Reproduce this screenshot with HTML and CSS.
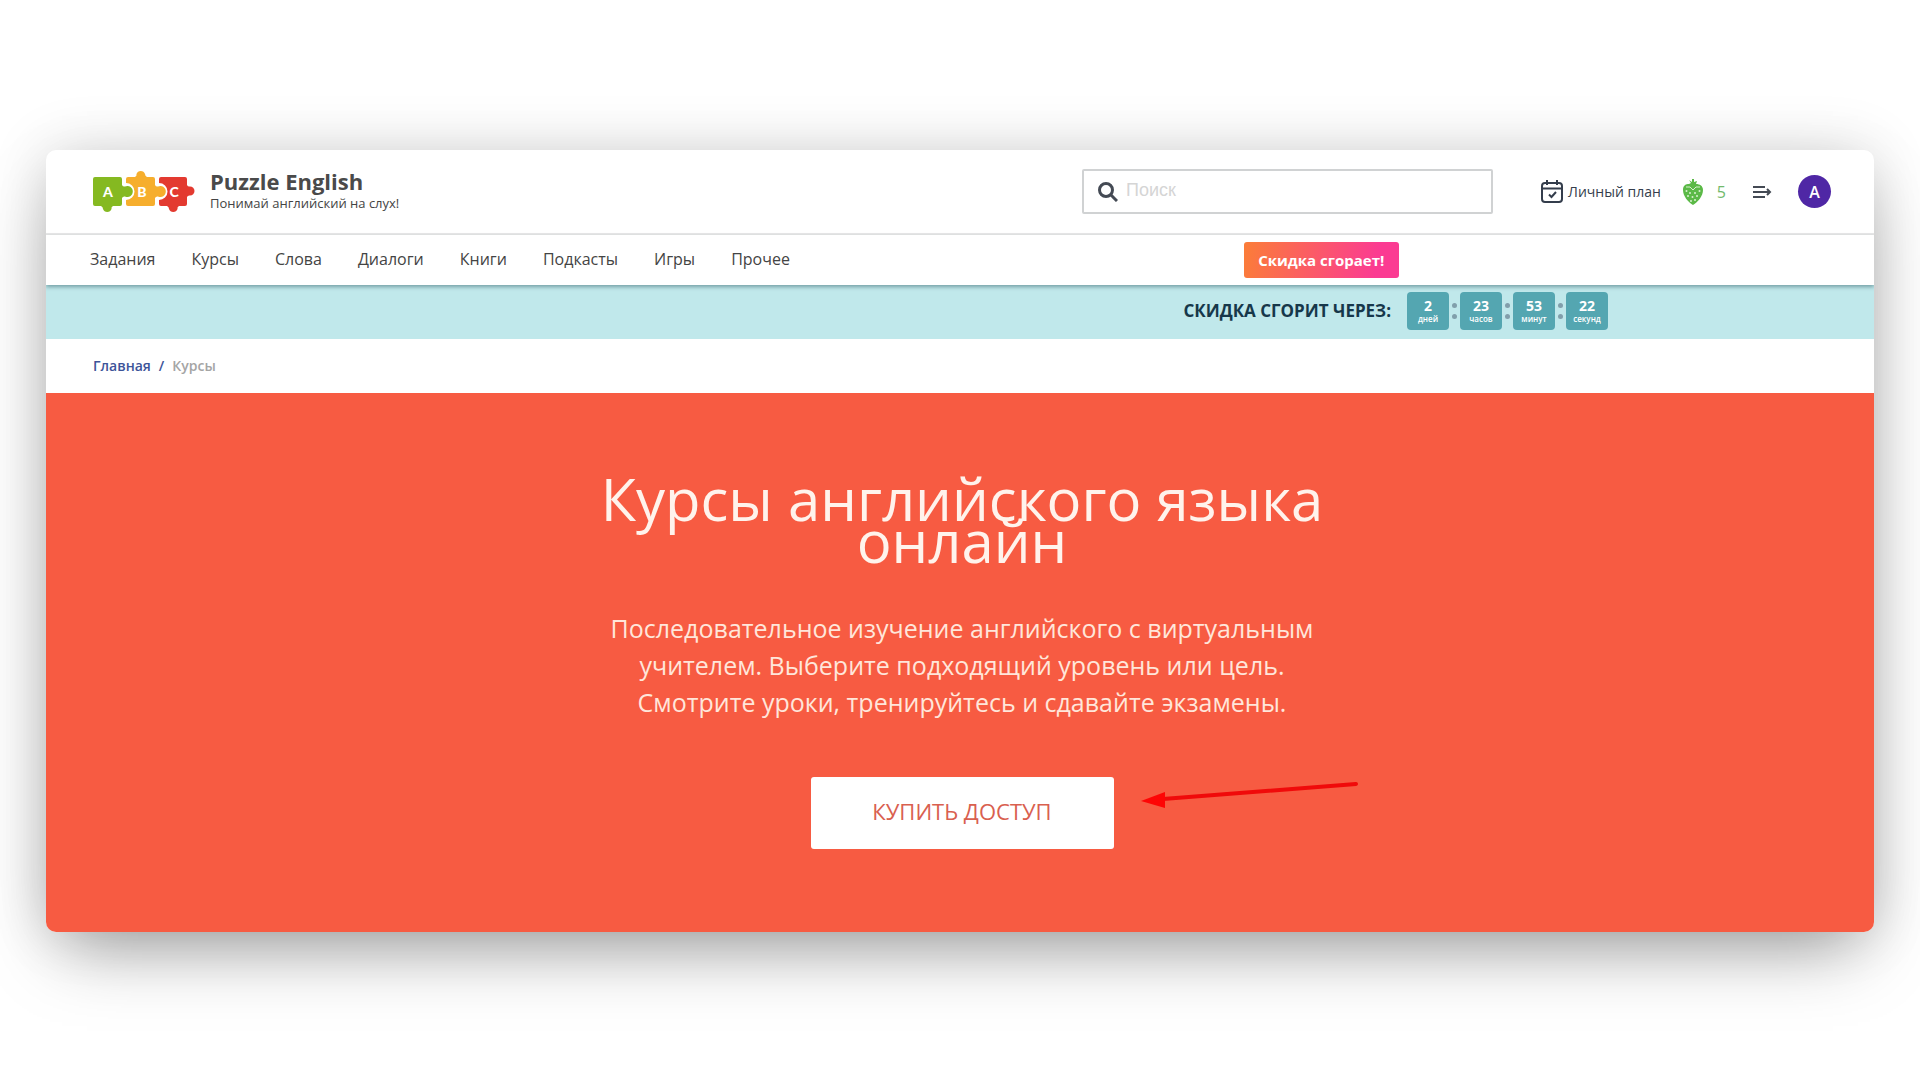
FILE: index.html
```html
<!DOCTYPE html>
<html lang="ru">
<head>
<meta charset="utf-8">
<meta name="viewport" content="width=device-width, initial-scale=1">
<title>Курсы английского языка онлайн — Puzzle English</title>
<link rel="stylesheet" href="styles.css">
</head>
<body>
<div class="window">
  <header class="header">
    <a class="brand" href="#">
      <svg class="brand-logo" viewBox="0 0 102 43" aria-hidden="true">
        <path fill="#85b921" d="M2 7H27Q29 7 29 9V15Q30 17 32 16.500A5.500 5.500 0 1 1 32 26.500Q30 26 29 28V34Q29 36 27 36H20Q18 37 18.500 39A4.500 4.500 0 0 1 10 39Q10 37 8 36H2Q0 36 0 34V9Q0 7 2 7Z"/>
        <path fill="#f6ae2d" d="M35 7H42Q44 6 43.500 4A4.500 4.500 0 0 1 52 4Q52 6 54 7H60Q62 7 62 9V15Q63 17 65 16.500A5.500 5.500 0 1 1 65 26.500Q63 26 62 28V34Q62 36 60 36H35Q33 36 33 34V30A8 8 0 1 0 33 13V9Q33 7 35 7Z"/>
        <path fill="#e33a30" d="M68 7H92Q94 7 94 9V15Q95 17 97 16.500A4.500 4.500 0 0 1 97 25.500Q95 25 94 27V34Q94 36 92 36H86Q84 37 84.500 39A4.500 4.500 0 0 1 76 39Q76 37 74 36H68Q66 36 66 34V30A8 8 0 1 0 66 13V9Q66 7 68 7Z"/>
        <g class="brand-letters"><text x="15" y="27">A</text><text x="49" y="27">B</text><text x="81" y="27">C</text></g>
      </svg>
      <span class="brand-text">
        <strong class="brand-name">Puzzle English</strong>
        <span class="brand-slogan">Понимай английский на слух!</span>
      </span>
    </a>
    <label class="search">
      <svg class="search-icon" viewBox="0 0 20 20" aria-hidden="true"><circle cx="8" cy="8" r="6.500"/><path d="M13 13l6 6"/></svg>
      <input class="search-input" type="search" placeholder="Поиск" aria-label="Поиск">
    </label>
    <div class="account">
      <a class="plan" href="#">
        <svg class="plan-icon" viewBox="0 0 22 23" aria-hidden="true"><rect x="1" y="3" width="20" height="19" rx="3"/><path d="M1 8.500H21M6 0V5M16 0V5M8 14.500l2.500 2.500 4.500-5"/></svg>
        <span>Личный план</span>
      </a>
      <a class="berries" href="#">
        <svg class="berry-icon" viewBox="0 0 20 26" aria-hidden="true">
          <path fill="#5bb947" d="M10 26C5 23 0 17 0 11 0 6 3 5 6 5L8 4 6 1 9 3 9 0 11 0 11 3 14 2 13 5C17 5 20 7 20 11 20 17 15 23 10 26Z"/>
          <path class="berry-leaf" d="M3 8l4 0 3 3 3-3 4 0"/>
          <g fill="#d9f0cf"><circle cx="3.500" cy="12" r="1"/><circle cx="7" cy="14" r="1"/><circle cx="12" cy="14" r="1"/><circle cx="16.500" cy="12" r="1"/><circle cx="5" cy="17" r="1"/><circle cx="9.500" cy="18" r="1"/><circle cx="14" cy="17" r="1"/><circle cx="8" cy="22" r="1"/><circle cx="12" cy="21" r="1"/></g>
        </svg>
        <span>5</span>
      </a>
      <button class="menu-button" type="button" aria-label="Меню">
        <svg class="menu-icon" viewBox="0 0 20 14" aria-hidden="true"><path d="M1 2H13M1 7H18M1 12H13M15 4l3 3-3 3"/></svg>
      </button>
      <button class="avatar" type="button">A</button>
    </div>
  </header>
  <nav class="nav">
    <a href="#">Задания</a>
    <a href="#">Курсы</a>
    <a href="#">Слова</a>
    <a href="#">Диалоги</a>
    <a href="#">Книги</a>
    <a href="#">Подкасты</a>
    <a href="#">Игры</a>
    <a href="#">Прочее</a>
    <button class="promo" type="button">Скидка сгорает!</button>
  </nav>
  <section class="countdown">
    <span class="countdown-title">СКИДКА СГОРИТ ЧЕРЕЗ:</span>
    <div class="timer">
      <div class="unit"><b>2</b><small>дней</small></div>
      <i class="colon"></i>
      <div class="unit"><b>23</b><small>часов</small></div>
      <i class="colon"></i>
      <div class="unit"><b>53</b><small>минут</small></div>
      <i class="colon"></i>
      <div class="unit"><b>22</b><small>секунд</small></div>
    </div>
  </section>
  <div class="breadcrumbs">
    <a href="#">Главная</a>
    <span class="slash">/</span>
    <span class="current">Курсы</span>
  </div>
  <main class="hero">
    <h1 class="hero-title">Курсы английского языка<br>онлайн</h1>
    <p class="hero-text">Последовательное изучение английского с виртуальным<br>учителем. Выберите подходящий уровень или цель.<br>Смотрите уроки, тренируйтесь и сдавайте экзамены.</p>
    <div class="hero-action">
      <button class="buy" type="button">КУПИТЬ ДОСТУП</button>
      <svg class="arrow" viewBox="0 0 218 32" aria-hidden="true"><path d="M22 20L215 5" stroke="#f00a0a" stroke-width="4" stroke-linecap="round"/><path fill="#fe0505" d="M0 22L24 13 24 29Z"/></svg>
    </div>
  </main>
</div>
</body>
</html>
```
FILE: styles.css
```css
* { box-sizing: border-box; }

body {
  margin: 0;
  background: #fff;
  color: #444;
  font-family: "Open Sans", "Noto Sans", sans-serif;
  font-size: 16px;
}

a { color: inherit; text-decoration: none; }
button { border: 0; font-family: inherit; cursor: pointer; }

.window {
  margin: 150px 46px;
  border-radius: 10px;
  overflow: hidden;
  background: #fff;
  box-shadow: 0 0 60px rgba(0, 0, 0, 0.14), 0 30px 70px -16px rgba(0, 0, 0, 0.36);
}

.header {
  display: flex;
  align-items: center;
  height: 85px;
  padding: 0 43px 0 47px;
  border-bottom: 2px solid #e8e8e8;
}

.brand { display: flex; align-items: center; gap: 15px; }
.brand-logo { width: 102px; height: 43px; }
.brand-letters {
  fill: #fff;
  font-family: Lato, sans-serif;
  font-size: 14px;
  font-weight: 900;
  text-anchor: middle;
}
.brand-text { display: flex; flex-direction: column; padding-bottom: 3px; }
.brand-name { font-size: 22px; line-height: 26px; color: #4a4a4a; }
.brand-slogan { font-size: 13px; line-height: 18px; }

.search {
  display: flex;
  align-items: center;
  gap: 8px;
  width: 411px;
  height: 45px;
  margin-left: auto;
  padding: 0 14px;
  border: 2px solid #d0d2d3;
  border-radius: 2px;
}
.search-icon { width: 20px; height: 20px; fill: none; stroke: #444a54; stroke-width: 3; }
.search-input {
  flex: 1;
  min-width: 0;
  padding: 0 0 2px;
  border: 0;
  outline: 0;
  background: none;
  font-family: "Liberation Sans", sans-serif;
  font-size: 18px;
}
.search-input::placeholder { color: #d5d5d5; opacity: 1; }

.account { display: flex; align-items: center; margin-left: 48px; color: #343d4c; }
.plan { display: flex; align-items: center; gap: 5px; font-size: 14px; }
.plan-icon { width: 22px; height: 23px; fill: none; stroke: #343d4c; stroke-width: 2; }
.berries { display: flex; align-items: center; gap: 14px; margin-left: 22px; color: #72b96c; }
.berry-icon { width: 20px; height: 26px; }
.berry-leaf { fill: none; stroke: #d9f0cf; stroke-width: 1; }
.menu-button { display: flex; margin-left: 26px; padding: 0; background: none; }
.menu-icon { width: 20px; height: 14px; fill: none; stroke: #444a54; stroke-width: 2; }
.avatar {
  width: 33px;
  height: 33px;
  margin-left: 26px;
  padding: 0;
  border-radius: 50%;
  background: #4f27a5;
  color: #fff;
  font-size: 16px;
  font-weight: 600;
}

.nav {
  position: relative;
  display: flex;
  align-items: center;
  gap: 36px;
  height: 50px;
  padding: 0 26% 0 44px;
  box-shadow: 0 2px 4px rgba(0, 50, 60, 0.4);
}
.nav a { padding-bottom: 3px; }
.promo {
  width: 155px;
  height: 36px;
  margin-left: auto;
  padding: 0;
  border-radius: 3px;
  background: linear-gradient(100deg, #fb7d38, #fb3b92 85%);
  color: #fff;
  font-size: 15px;
  font-weight: 700;
}

.countdown {
  display: flex;
  align-items: center;
  justify-content: flex-end;
  gap: 16px;
  height: 54px;
  padding: 0 266px 2px 0;
  background: #c0e8eb;
}
.countdown-title { padding-bottom: 2px; color: #16374a; font-size: 17px; font-weight: 700; }
.timer { display: flex; align-items: center; }
.unit {
  display: flex;
  flex-direction: column;
  align-items: center;
  justify-content: center;
  width: 42px;
  height: 38px;
  border-radius: 4px;
  background: #54a6b1;
  color: #fff;
}
.unit b { font-size: 14px; line-height: 16px; }
.unit small { font-size: 8px; font-weight: 600; line-height: 10px; }
.colon { display: grid; gap: 6px; width: 11px; justify-content: center; }
.colon::before, .colon::after { content: ""; width: 5px; height: 5px; border-radius: 50%; background: #819fab; }

.breadcrumbs {
  display: flex;
  align-items: center;
  gap: 8px;
  height: 54px;
  padding: 0 47px 2px;
  font-size: 14px;
  font-weight: 600;
  color: #3d5499;
}
.current { color: #a5a5a5; }

.hero {
  display: flex;
  flex-direction: column;
  align-items: center;
  padding: 85px 20px 83px 24px;
  background: #f75b42;
  color: #fff3ec;
  text-align: center;
}
.hero-title { margin: 0; font-size: 58px; font-weight: 400; line-height: 42px; }
.hero-text { margin: 48px 0 56px; color: #ffe6da; font-size: 25px; font-weight: 400; line-height: 37px; }
.hero-action { position: relative; }
.buy {
  display: block;
  width: 303px;
  height: 72px;
  padding: 0 0 4px;
  border-radius: 3px;
  background: #fff;
  color: #d9604f;
  font-size: 22px;
}
.arrow { position: absolute; top: 2px; left: 330px; width: 218px; height: 32px; fill: none; }
```
